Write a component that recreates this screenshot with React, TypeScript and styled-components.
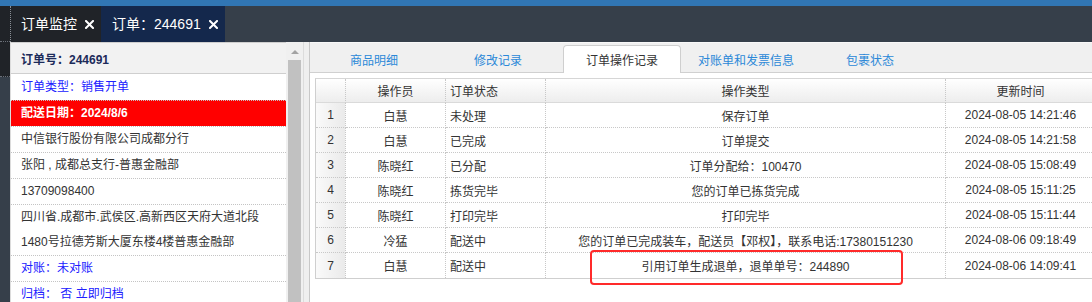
import styled, { createGlobalStyle } from 'styled-components';

const GlobalStyle = createGlobalStyle`
  html, body {
    margin: 0;
    padding: 0;
    background: #363f4a;
  }
  body {
    font-family: "Liberation Sans", "Noto Sans CJK SC", sans-serif;
    font-size: 12px;
    color: #333;
  }
  * {
    box-sizing: border-box;
  }
`;

const Page = styled.div`
  width: 1092px;
  height: 302px;
  overflow: hidden;
  display: flex;
  flex-direction: column;
  background: #363f4a;
`;

const TopStrip = styled.div`
  height: 6px;
  flex-shrink: 0;
  background: #3176b4;
`;

const TabBar = styled.div`
  height: 36px;
  flex-shrink: 0;
  display: flex;
  background: #363f4a;
`;

const BarCorner = styled.div`
  width: 10px;
  background: #202328;
  border-bottom: 1px dotted #6b7079;
`;

const PageTab = styled.div<{ $current?: boolean }>`
  display: flex;
  align-items: center;
  gap: 8px;
  padding: 0 7px 0 ${(p) => (p.$current ? '11px' : '10px')};
  background: ${(p) => (p.$current ? '#14284c' : '#202328')};
  border-left: ${(p) => (p.$current ? 'none' : '1px dotted #8a8f96')};
  color: #fff;
  font-size: 14px;
  line-height: 1;
`;

const CloseIcon = () => (
  <svg width="9" height="9" viewBox="0 0 9 9">
    <path d="M1 1 L8 8 M8 1 L1 8" stroke="#fff" strokeWidth="2" strokeLinecap="square" />
  </svg>
);

const Body = styled.div`
  flex: 1;
  min-height: 0;
  display: flex;
`;

const SideRail = styled.div`
  width: 10px;
  flex-shrink: 0;
`;

const RailItem = styled.div`
  height: 35px;
  background: #202328;
  border-bottom: 1px dotted #6b7079;
`;

const InfoPane = styled.div`
  width: 276px;
  flex-shrink: 0;
  background: #fff;
  border-left: 1px solid #dcdcdc;
  overflow: hidden;
`;

const InfoHeader = styled.div`
  height: 32px;
  display: flex;
  align-items: center;
  padding-left: 10px;
  background: #f2f2f2;
  border-top: 1px solid #cfcfcf;
  border-bottom: 1px solid #cfcfcf;
  color: #1c2b5a;
  font-weight: bold;
`;

type Tone = 'plain' | 'link' | 'alert';

const toneColor: Record<Tone, string> = {
  plain: '#333',
  link: '#2020ff',
  alert: '#fff',
};

const InfoRow = styled.div<{ $tone?: Tone; $first?: boolean }>`
  min-height: 26px;
  display: flex;
  align-items: center;
  padding: 0 8px 0 10px;
  line-height: 25px;
  border-top: ${(p) => (p.$first ? 'none' : '1px dotted #c4c4c4')};
  background: ${(p) => (p.$tone === 'alert' ? '#ff0000' : 'transparent')};
  color: ${(p) => toneColor[p.$tone ?? 'plain']};
  font-weight: ${(p) => (p.$tone === 'alert' ? 'bold' : 'normal')};
`;

const ScrollTrack = styled.div`
  width: 18px;
  flex-shrink: 0;
  display: flex;
  flex-direction: column;
  align-items: center;
  padding-top: 8px;
  background: #f0f0f0;
  border-right: 1px solid #dcdcdc;
`;

const ScrollArrow = styled.div`
  width: 0;
  height: 0;
  border-left: 4px solid transparent;
  border-right: 4px solid transparent;
  border-bottom: 4px solid #a3a3a3;
`;

const ScrollThumb = styled.div`
  flex: 1;
  width: 13px;
  margin-top: 6px;
  background: #c1c1c1;
`;

const Splitter = styled.div`
  width: 5px;
  flex-shrink: 0;
  background: #efefef;
`;

const DetailPane = styled.div`
  flex: 1;
  min-width: 0;
  display: flex;
  flex-direction: column;
  background: #fff;
  border-left: 1px solid #c8c8c8;
`;

const TabStrip = styled.div`
  height: 31px;
  flex-shrink: 0;
  display: flex;
  align-items: flex-end;
  gap: 6px;
  padding-left: 5px;
  background: #f0f0f0;
  border-top: 1px solid #f8f8f8;
  border-bottom: 1px solid #d0d0d0;
`;

const SubTab = styled.div<{ $active?: boolean }>`
  width: 118px;
  height: 28px;
  margin-bottom: -1px;
  display: flex;
  align-items: center;
  justify-content: center;
  border: 1px solid ${(p) => (p.$active ? '#cfcfcf' : 'transparent')};
  border-bottom: none;
  border-radius: 4px 4px 0 0;
  background: ${(p) => (p.$active ? '#fff' : 'transparent')};
  color: ${(p) => (p.$active ? '#333' : '#2b88d8')};
`;

const GridArea = styled.div`
  flex: 1;
  padding: 5px 0 0 5px;
  overflow: hidden;
`;

const Grid = styled.div`
  width: 781px;
  border-left: 1px solid #cfcfcf;
  border-top: 1px solid #d6d6d6;
  border-bottom: 1px solid #cfcfcf;
`;

const GridRow = styled.div`
  display: grid;
  grid-template-columns: 30px 100px 100px 400px 150px;
  &:last-child > div {
    border-bottom: none;
  }
`;

const HeadCell = styled.div<{ $left?: boolean }>`
  height: 24px;
  display: flex;
  align-items: center;
  justify-content: ${(p) => (p.$left ? 'flex-start' : 'center')};
  padding-left: ${(p) => (p.$left ? '4px' : '0')};
  background: linear-gradient(#ffffff, #ededed);
  border-right: 1px dotted #c8c8c8;
  border-bottom: 1px solid #dadada;
`;

const Cell = styled.div<{ $left?: boolean; $index?: boolean }>`
  position: relative;
  height: 25px;
  display: flex;
  align-items: center;
  justify-content: ${(p) => (p.$left ? 'flex-start' : 'center')};
  padding-left: ${(p) => (p.$left ? '4px' : '0')};
  white-space: nowrap;
  background: ${(p) => (p.$index ? 'linear-gradient(to right, #fafafa, #eaeaea)' : '#fff')};
  border-right: 1px dotted #c8c8c8;
  border-bottom: 1px dotted #c8c8c8;
`;

const Highlight = styled.div`
  position: absolute;
  left: 44px;
  top: -3px;
  width: 313px;
  height: 35px;
  border: 2px solid #ff2a2a;
  border-radius: 4px;
  pointer-events: none;
`;

const records = [
  ['1', '白慧', '未处理', '保存订单', '2024-08-05 14:21:46'],
  ['2', '白慧', '已完成', '订单提交', '2024-08-05 14:21:58'],
  ['3', '陈晓红', '已分配', '订单分配给：100470', '2024-08-05 15:08:49'],
  ['4', '陈晓红', '拣货完毕', '您的订单已拣货完成', '2024-08-05 15:11:25'],
  ['5', '陈晓红', '打印完毕', '打印完毕', '2024-08-05 15:11:44'],
  ['6', '冷猛', '配送中', '您的订单已完成装车，配送员【邓权】，联系电话:17380151230', '2024-08-06 09:18:49'],
  ['7', '白慧', '配送中', '引用订单生成退单，退单单号：244890', '2024-08-06 14:09:41'],
];

const tabs = ['商品明细', '修改记录', '订单操作记录', '对账单和发票信息', '包裹状态'];

export default function App() {
  return (
    <Page>
      <GlobalStyle />
      <TopStrip />
      <TabBar>
        <BarCorner />
        <PageTab>
          订单监控
          <CloseIcon />
        </PageTab>
        <PageTab $current>
          订单：244691
          <CloseIcon />
        </PageTab>
      </TabBar>
      <Body>
        <SideRail>
          <RailItem />
        </SideRail>
        <InfoPane>
          <InfoHeader>订单号：244691</InfoHeader>
          <InfoRow $tone="link" $first>订单类型：销售开单</InfoRow>
          <InfoRow $tone="alert">配送日期：2024/8/6</InfoRow>
          <InfoRow>中信银行股份有限公司成都分行</InfoRow>
          <InfoRow>张阳 , 成都总支行-普惠金融部</InfoRow>
          <InfoRow>13709098400</InfoRow>
          <InfoRow>
            四川省.成都市.武侯区.高新西区天府大道北段
            <br />
            1480号拉德芳斯大厦东楼4楼普惠金融部
          </InfoRow>
          <InfoRow $tone="link">对账：未对账</InfoRow>
          <InfoRow $tone="link">归档：&nbsp;否 立即归档</InfoRow>
        </InfoPane>
        <ScrollTrack>
          <ScrollArrow />
          <ScrollThumb />
        </ScrollTrack>
        <Splitter />
        <DetailPane>
          <TabStrip>
            {tabs.map((t) => (
              <SubTab key={t} $active={t === '订单操作记录'}>
                {t}
              </SubTab>
            ))}
          </TabStrip>
          <GridArea>
            <Grid>
              <GridRow>
                <HeadCell />
                <HeadCell>操作员</HeadCell>
                <HeadCell $left>订单状态</HeadCell>
                <HeadCell>操作类型</HeadCell>
                <HeadCell>更新时间</HeadCell>
              </GridRow>
              {records.map(([no, user, state, action, time]) => (
                <GridRow key={no}>
                  <Cell $index>{no}</Cell>
                  <Cell>{user}</Cell>
                  <Cell $left>{state}</Cell>
                  <Cell>
                    {action}
                    {no === '7' && <Highlight />}
                  </Cell>
                  <Cell>{time}</Cell>
                </GridRow>
              ))}
            </Grid>
          </GridArea>
        </DetailPane>
      </Body>
    </Page>
  );
}
